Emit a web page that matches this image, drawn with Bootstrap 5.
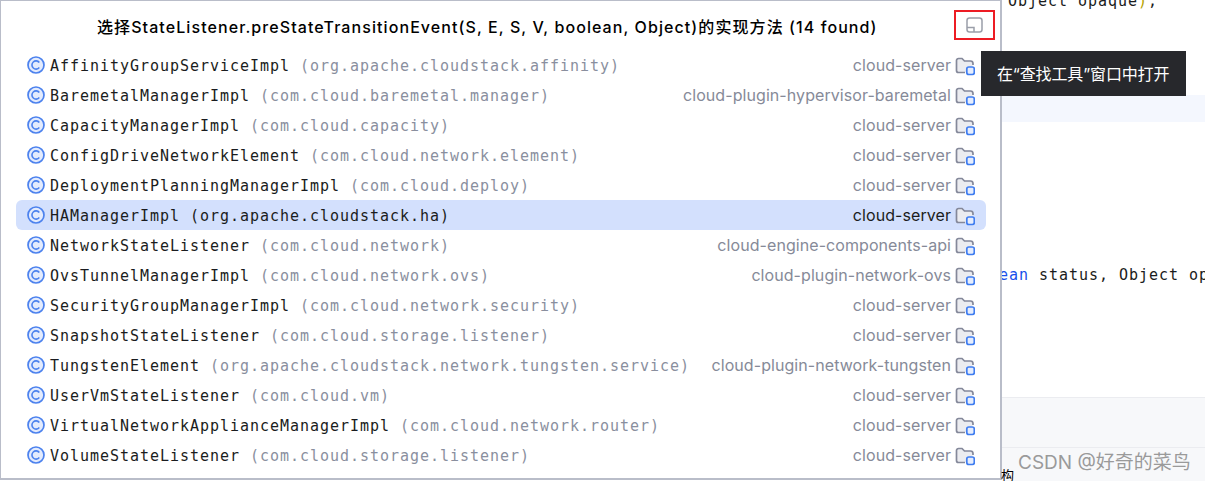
<!DOCTYPE html>
<html lang="zh">
<head>
  <meta charset="UTF-8" />
  <meta name="viewport" content="width=device-width, initial-scale=1" />
  <title>选择实现方法</title>
  <link href="https://cdn.jsdelivr.net/npm/bootstrap@5.3.3/dist/css/bootstrap.min.css" rel="stylesheet" />
  <style>
    body {
      background-color: #fff;
      overflow: hidden;
      height: 481px;
    }
    .stage {
      height: 481px;
    }
    .popup-wrap {
      width: 1002px;
      flex: none;
    }
    .popup-box {
      height: 480px;
      border: 1px solid #b9bdc9;
      border-right-width: 2px;
      border-bottom-width: 2px;
      padding: 0 14px 0 15px;
      background: #fff;
    }
    .popup-head {
      height: 49px;
      font-family: Inter, "Noto Sans CJK SC", sans-serif;
      font-size: 16px;
      font-weight: 500;
      letter-spacing: 1.08px;
      color: #000;
      padding-top: 2px;
      padding-left: 81px;
    }
    .pin-btn {
      position: absolute;
      left: 954px;
      top: 10px;
      width: 41px;
      height: 30px;
      border: 2px solid #ed1c24;
    }
    .result-row {
      height: 30px;
      padding: 0 11px;
      border-radius: 6px;
      white-space: nowrap;
    }
    .result-row.picked {
      background: #d3e0fd;
    }
    .cls-ic {
      width: 18px;
      height: 18px;
      margin-right: 5px;
      flex: none;
    }
    .cls-name, .cls-pkg {
      font-family: "DejaVu Sans Mono", monospace;
      font-size: 15px;
      letter-spacing: .97px;
      padding-top: 2px;
    }
    .cls-name {
      color: #1a1c20;
      margin-right: 10px;
    }
    .cls-pkg {
      color: #8a8f9e;
    }
    .mod-name {
      font-family: Inter, sans-serif;
      font-size: 16px;
      letter-spacing: .07px;
      color: #868a98;
      margin-left: auto;
      margin-right: 4px;
    }
    .picked .mod-name, .picked .cls-pkg {
      color: #1a1c20;
    }
    .fold-ic {
      width: 20px;
      height: 20px;
      flex: none;
      margin-top: 4px;
    }
    .tip-box {
      position: absolute;
      left: 981px;
      top: 51px;
      width: 205px;
      height: 45px;
      background: #27282c;
      color: #fff;
      font-family: Inter, "Noto Sans CJK SC", sans-serif;
      font-size: 16px;
      letter-spacing: -.15px;
      padding-left: 16px;
    }
    .editor-side {
      position: relative;
      font-family: "DejaVu Sans Mono", monospace;
      font-size: 15px;
      letter-spacing: .97px;
      color: #1a1c20;
      white-space: nowrap;
      overflow: hidden;
    }
    .code-top {
      height: 95px;
      margin-top: -10px;
      padding-left: 6px;
      margin-bottom: 10px;
    }
    .code-paren {
      color: #b5a200;
    }
    .line-hl {
      height: 27px;
      background: #f4f7fe;
    }
    .code-gap {
      height: 142px;
    }
    .code-mid {
      height: 30px;
      margin-left: -3px;
    }
    .code-kw {
      color: #1750eb;
    }
    .code-gap2 {
      height: 103px;
    }
    .bottom-band {
      height: 50px;
      background: #f7f8fa;
      border-top: 1px solid #ebecf0;
    }
    .bottom-bar {
      height: 34px;
      background: #f7f8fa;
      border-top: 1px solid #ebecf0;
    }
    .wm-text {
      position: absolute;
      left: 1018px;
      top: 449px;
      font-family: Inter, "Noto Sans CJK SC", sans-serif;
      font-size: 19px;
      color: #9a9a9a;
      white-space: nowrap;
    }
    .cut-glyph {
      position: absolute;
      left: 1001px;
      top: 465px;
      font-family: "Noto Sans CJK SC", sans-serif;
      font-size: 13px;
      color: #000;
    }
  </style>
</head>
<body>

<svg width="0" height="0" class="d-block position-absolute">
  <symbol id="ic-class" viewBox="0 0 18 18">
    <circle cx="9" cy="9" r="8" fill="#e3ebfd" stroke="#4c82ee" stroke-width="1.700"/>
    <path d="M12.300 6.500A4.100 4.100 0 1 0 12.300 11.500" fill="none" stroke="#4c82ee" stroke-width="1.600"/>
  </symbol>
  <symbol id="ic-folder" viewBox="0 0 20 20">
    <path d="M10 15.500H3.500A2 2 0 0 1 1.500 13.500V3.500A2 2 0 0 1 3.500 1.500H7L9.500 4H15.500A2.500 2.500 0 0 1 18 6.500V8" fill="#ebecf0" stroke="#84889a" stroke-width="1.700"/>
    <rect x="11.800" y="10" width="7.500" height="7.500" rx="2" fill="#e6edfd" stroke="#3f7df0" stroke-width="1.700"/>
  </symbol>
</svg>

<div class="stage d-flex">
  <!-- popup -->
  <div class="popup-wrap">
    <div class="popup-box">
      <div class="popup-head d-flex align-items-center">选择StateListener.preStateTransitionEvent(S, E, S, V, boolean, Object)的实现方法 (14 found)</div>
      <div id="rows"></div>
    </div>
  </div>

  <!-- editor behind the popup -->
  <div class="editor-side flex-grow-1">
    <div class="code-top">Object opaque<span class="code-paren">)</span>;</div>
    <div class="line-hl"></div>
    <div class="code-gap"></div>
    <div class="code-mid"><span class="code-kw">ean</span> status, Object op</div>
    <div class="code-gap2"></div>
    <div class="bottom-band"></div>
    <div class="bottom-bar"></div>
  </div>
</div>

<div class="pin-btn d-flex align-items-center justify-content-center">
  <svg width="17" height="16" viewBox="0 0 17 16" fill="none" stroke="#9a9ea9" stroke-width="1.500">
    <rect x="1" y="1" width="15" height="14" rx="2.500"/>
    <path d="M1 10.500H8V15"/>
  </svg>
</div>

<div class="tip-box d-flex align-items-center">在“查找工具”窗口中打开</div>

<div class="wm-text">CSDN @好奇的菜鸟</div>
<div class="cut-glyph">构</div>

<script>
  const results = [
    ['AffinityGroupServiceImpl', 'org.apache.cloudstack.affinity', 'cloud-server'],
    ['BaremetalManagerImpl', 'com.cloud.baremetal.manager', 'cloud-plugin-hypervisor-baremetal'],
    ['CapacityManagerImpl', 'com.cloud.capacity', 'cloud-server'],
    ['ConfigDriveNetworkElement', 'com.cloud.network.element', 'cloud-server'],
    ['DeploymentPlanningManagerImpl', 'com.cloud.deploy', 'cloud-server'],
    ['HAManagerImpl', 'org.apache.cloudstack.ha', 'cloud-server'],
    ['NetworkStateListener', 'com.cloud.network', 'cloud-engine-components-api'],
    ['OvsTunnelManagerImpl', 'com.cloud.network.ovs', 'cloud-plugin-network-ovs'],
    ['SecurityGroupManagerImpl', 'com.cloud.network.security', 'cloud-server'],
    ['SnapshotStateListener', 'com.cloud.storage.listener', 'cloud-server'],
    ['TungstenElement', 'org.apache.cloudstack.network.tungsten.service', 'cloud-plugin-network-tungsten'],
    ['UserVmStateListener', 'com.cloud.vm', 'cloud-server'],
    ['VirtualNetworkApplianceManagerImpl', 'com.cloud.network.router', 'cloud-server'],
    ['VolumeStateListener', 'com.cloud.storage.listener', 'cloud-server']
  ];

  document.getElementById('rows').innerHTML = results.map((r, i) => `
    <div class="result-row d-flex align-items-center ${i === 5 ? 'picked' : ''}">
      <svg class="cls-ic"><use href="#ic-class"/></svg>
      <span class="cls-name">${r[0]}</span>
      <span class="cls-pkg">(${r[1]})</span>
      <span class="mod-name">${r[2]}</span>
      <svg class="fold-ic"><use href="#ic-folder"/></svg>
    </div>`).join('');
</script>
<script src="https://cdn.jsdelivr.net/npm/bootstrap@5.3.3/dist/js/bootstrap.bundle.min.js"></script>
</body>
</html>
